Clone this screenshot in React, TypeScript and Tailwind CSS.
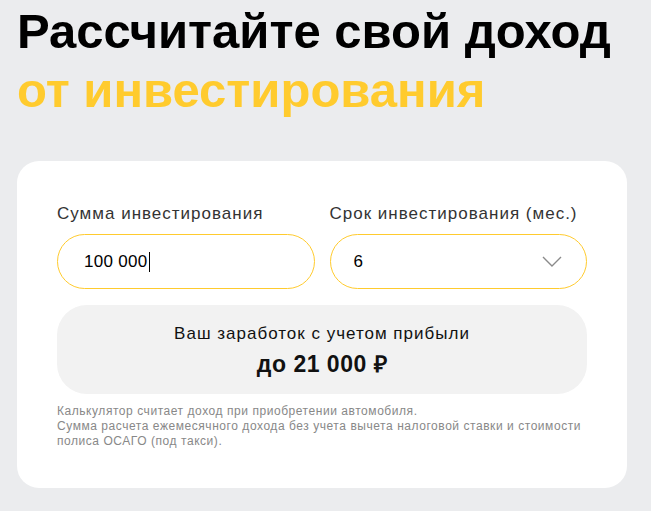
import React from "react";

export default function App() {
  return (
    <div
      className="min-h-[511px] w-full bg-[#ebecee] px-[17px] pt-[2px] pb-[22px]"
      style={{ fontFamily: '"Liberation Sans", Arial, sans-serif' }}
    >
      <h1 className="text-[49px] font-bold leading-[59px] text-black">
        Рассчитайте свой доход
        <br />
        <span className="text-[#ffcb2e]">от инвестирования</span>
      </h1>
      <div className="mt-[41px] w-[610px] rounded-[22px] bg-white px-[40px] pt-[42px] pb-[39px]">
        <div className="grid grid-cols-2 gap-[15px]">
          <div>
            <div className="text-[17px] leading-[22px] tracking-[1px] text-[#333]">Сумма инвестирования</div>
            <div className="mt-[9px] flex h-[55px] items-center rounded-full border border-[#ffcb2e] pl-[26px] text-[17px] tracking-[0.3px] text-black">
              <span>100 000</span>
              <span className="ml-[1px] inline-block h-[20px] w-[1px] bg-black" />
            </div>
          </div>
          <div>
            <div className="text-[17px] leading-[22px] tracking-[1px] text-[#333]">Срок инвестирования (мес.)</div>
            <div className="mt-[9px] flex h-[55px] items-center justify-between rounded-full border border-[#ffcb2e] pl-[23px] pr-[24px] text-[17px] text-black">
              <span>6</span>
              <svg width="20" height="11" viewBox="0 0 20 11" fill="none">
                <path d="M1 1l9 9 9-9" stroke="#8a8a8a" strokeWidth="1.4" />
              </svg>
            </div>
          </div>
        </div>
        <div className="mt-[16px] flex h-[89px] flex-col items-center justify-center rounded-[30px] bg-[#f2f2f2]">
          <div className="text-[17px] leading-[22px] tracking-[1px] text-[#111]">Ваш заработок с учетом прибыли</div>
          <div className="mt-[6px] text-[23px] font-bold leading-[26px] tracking-[0.5px] text-[#111]">до 21 000 ₽</div>
        </div>
        <div className="mt-[10px] text-[12px] leading-[15px] tracking-[0.55px] text-[#888]">
          Калькулятор считает доход при приобретении автомобиля.
          <br />
          Сумма расчета ежемесячного дохода без учета вычета налоговой ставки и стоимости
          <br />
          полиса ОСАГО (под такси).
        </div>
      </div>
    </div>
  );
}
